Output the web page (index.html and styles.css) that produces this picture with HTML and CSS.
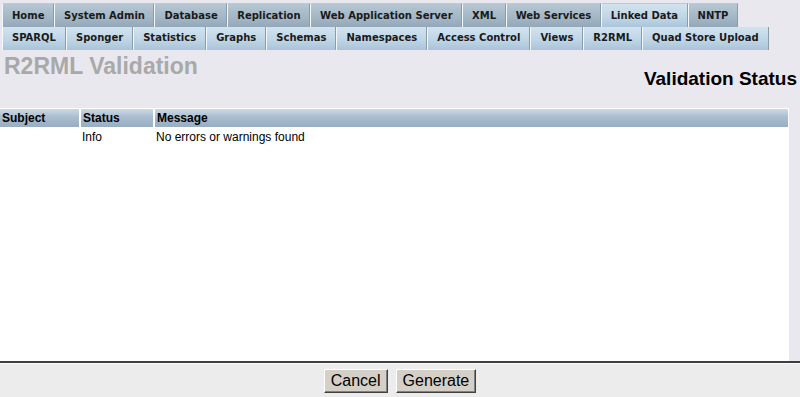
FILE: index.html
```html
<!DOCTYPE html>
<html lang="en">
<head>
  <meta charset="UTF-8" />
  <title>R2RML Validation</title>
  <link rel="stylesheet" href="styles.css">
</head>
<body>
  <nav class="tabs">
    <ul class="tab-row top">
      <li>Home</li>
      <li>System Admin</li>
      <li>Database</li>
      <li>Replication</li>
      <li>Web Application Server</li>
      <li>XML</li>
      <li>Web Services</li>
      <li class="active">Linked Data</li>
      <li>NNTP</li>
    </ul>
    <ul class="tab-row sub">
      <li>SPARQL</li>
      <li>Sponger</li>
      <li>Statistics</li>
      <li>Graphs</li>
      <li>Schemas</li>
      <li>Namespaces</li>
      <li>Access Control</li>
      <li>Views</li>
      <li>R2RML</li>
      <li>Quad Store Upload</li>
    </ul>
  </nav>

  <div class="page-head">
    <h1>R2RML Validation</h1>
    <h2>Validation Status</h2>
  </div>

  <main class="panel">
    <table class="listing">
      <thead>
        <tr>
          <th class="col-subject">Subject</th>
          <th class="col-status">Status</th>
          <th>Message</th>
        </tr>
      </thead>
      <tbody>
        <tr>
          <td></td>
          <td>Info</td>
          <td>No errors or warnings found</td>
        </tr>
      </tbody>
    </table>
  </main>

  <footer class="actions">
    <button>Cancel</button>
    <button>Generate</button>
  </footer>
</body>
</html>
```

FILE: styles.css
```css
* {
  box-sizing: border-box;
  margin: 0;
  padding: 0;
}
html, body {
  height: 100%;
}
body {
  font-family: 'Liberation Sans', Arial, sans-serif;
  font-size: 12px;
  background: #e8e8ee;
  color: #000;
  display: flex;
  flex-direction: column;
  overflow: hidden;
}
.tabs {
  padding: 3px 0 0 2px;
}
.tab-row {
  list-style: none;
  display: flex;
}
.tab-row li {
  font-family: 'DejaVu Sans', Verdana, sans-serif;
  font-weight: bold;
  font-size: 10px;
  color: #1a1a1a;
  border-left: 1px solid #f4f7fa;
  border-right: 1px solid #8b9daa;
  white-space: nowrap;
}
.tab-row.top li {
  height: 24px;
  line-height: 23px;
  padding: 0 8.5px 0 9px;
  border-top: 1px solid #c6c6c6;
  background: linear-gradient(#b7c7d3, #a3b6c5 60%, #93a8b9);
}
.tab-row.top li.active {
  background: linear-gradient(#d3e3ee, #bed5e5 60%, #aac6da);
}
.tab-row.sub li {
  height: 23px;
  line-height: 22px;
  padding: 0 9px;
  background: linear-gradient(#d2e3ef, #bdd4e5 60%, #a9c3d8);
}
.page-head {
  display: flex;
  justify-content: space-between;
  align-items: flex-start;
  height: 58px;
}
.page-head h1 {
  font-size: 23px;
  font-weight: bold;
  color: #a9a9a9;
  line-height: 26px;
  padding: 3px 0 0 4px;
}
.page-head h2 {
  font-size: 19px;
  font-weight: bold;
  line-height: 22px;
  margin-top: 18px;
  padding-right: 3px;
}
.panel {
  flex: 1;
  width: 789px;
  background: #fff;
  padding-top: 1px;
}
.listing {
  width: 788px;
  border-collapse: collapse;
}
.listing th {
  text-align: left;
  font-weight: bold;
  height: 18px;
  padding: 0 2px;
  border-left: 2px solid #fff;
  background: linear-gradient(#cdd9e4, #a9bdd0 45%, #97adc2);
}
.listing th:first-child {
  border-left: none;
}
.col-subject {
  width: 80px;
}
.col-status {
  width: 74px;
}
.listing td {
  height: 19px;
  padding: 1px 1px 0;
  border-left: 2px solid #fff;
}
.listing td:first-child {
  border-left: none;
}
.actions {
  height: 36px;
  border-top: 2px solid #3f3f3f;
  box-shadow: inset 0 1px 0 #fafafa;
  background: #ececec;
  display: flex;
  justify-content: center;
  align-items: flex-start;
  gap: 8px;
  padding-top: 6px;
}
.actions button {
  font-family: 'Liberation Sans', Arial, sans-serif;
  font-size: 16px;
  height: 24px;
  padding: 0 6px;
  background: #d4d0c8;
  color: #000;
  border: 1px solid;
  border-color: #fff #404040 #404040 #fff;
  box-shadow: inset -1px -1px 0 #808080;
  cursor: pointer;
}
```
